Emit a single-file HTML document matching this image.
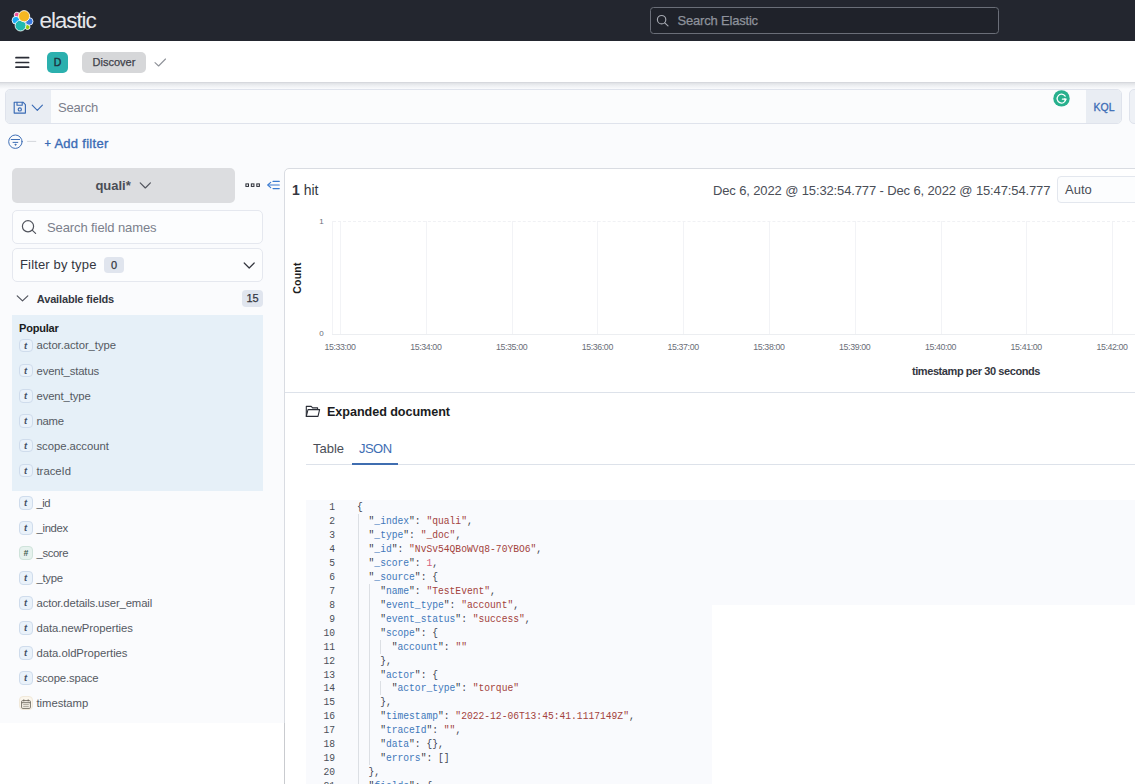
<!DOCTYPE html>
<html>
<head>
<meta charset="utf-8">
<title>Discover - Elastic</title>
<style>
*{box-sizing:border-box;margin:0;padding:0}
html,body{width:1135px;height:784px;overflow:hidden;background:#fff}
body{font-family:"Liberation Sans",sans-serif;color:#343741;position:relative;font-size:13px}
.abs{position:absolute}
#page{position:absolute;left:0;top:0;width:1135px;height:784px;overflow:hidden;background:#fff}
/* top dark header */
#hdr{left:0;top:0;width:1135px;height:41px;background:#23262f}
#hdr .brand{left:39.5px;top:8px;font-size:22.5px;color:#e6e7ea;letter-spacing:-1.1px;line-height:26px}
#gsearch{left:650px;top:6.7px;width:349px;height:27.8px;border:1px solid #6a6e78;border-radius:3.5px;background:#1f222a}
#gsearch span{position:absolute;left:26.6px;top:5.6px;font-size:13px;line-height:15px;color:#8e929c;letter-spacing:-0.2px;-webkit-text-stroke:0.25px #8e929c}
/* second header */
#hdr2{left:0;top:41px;width:1135px;height:42px;background:#fff;border-bottom:1px solid #d6d8dd}
#hdr2shadow{left:0;top:83px;width:1135px;height:6px;background:linear-gradient(#dfe1e5,#eceef1 40%,#fafbfd)}
#avatar{left:47px;top:52px;width:21px;height:21px;border-radius:5px;background:#2bb0ae;color:#1d3340;font-size:10.5px;text-align:center;line-height:21px;-webkit-text-stroke:0.4px #1d3340}
#crumb{left:82px;top:52px;width:64px;height:21px;border-radius:5px;background:#d6d7d9;color:#3f424b;font-size:11px;text-align:center;line-height:21px;-webkit-text-stroke:0.25px #3f424b}
/* body bg */
#bodybg{left:0;top:83px;width:1135px;height:640px;background:#fafbfd}
/* query bar */
#qbar{left:5px;top:89px;width:1117px;height:35px;border:1px solid #dfe3ec;border-radius:5px;background:#fbfcfd;overflow:hidden}
#qbar .pre{left:0;top:0;width:45px;height:33px;background:#e9edf3}
#qbar .ph{left:52px;top:9.5px;font-size:13px;line-height:15px;color:#7b808c;letter-spacing:-0.2px}
#qbar .kql{left:1080px;top:0;width:36px;height:33px;background:#e9edf3;color:#3a6bb5;font-size:10.5px;text-align:center;line-height:34px;-webkit-text-stroke:0.3px #3a6bb5}
#qbar2{left:1129px;top:89px;width:20px;height:35px;border:1px solid #dfe3ec;border-radius:5px;background:#eef1f6}
#gram{left:1053px;top:90px;width:17px;height:17px;border-radius:50%;background:#27b08d}
#addf{left:44.5px;top:135.5px;font-size:13px;line-height:16px;color:#3a6bb5;letter-spacing:0.28px;-webkit-text-stroke:0.35px #3a6bb5}
/* sidebar */
#ipat{left:12px;top:168.2px;width:222.8px;height:34.6px;border-radius:5px;background:#dcdde0}
#ipat span{position:absolute;left:83.4px;top:9.7px;font-size:13px;font-weight:bold;color:#4a4d56;line-height:16px}
.fbox{left:12px;width:251px;height:33px;border:1px solid #e5e8ef;border-radius:5px;background:#fcfdfe}
#sfn{top:210px;height:34.2px}
#sfn span{position:absolute;left:34px;top:9.3px;font-size:13px;line-height:16px;color:#7b808c;letter-spacing:-0.1px}
#fbt{top:248.2px;height:34.2px}
#fbt span.l{position:absolute;left:7px;top:7.5px;font-size:13px;line-height:16px;color:#343741;letter-spacing:0.15px}
#fbt span.b{position:absolute;left:91px;top:7.5px;width:20px;height:16.5px;border-radius:4px;background:#e0e5ee;font-size:11px;line-height:17px;text-align:center;color:#343741;-webkit-text-stroke:0.25px #343741}
#avail{left:36.8px;top:291.5px;font-size:11px;font-weight:bold;line-height:14px;color:#343741;letter-spacing:-0.15px}
#availn{left:242px;top:290px;width:21px;height:17px;border-radius:4px;background:#e0e5ee;font-size:11px;line-height:17px;text-align:center;color:#343741;-webkit-text-stroke:0.25px #343741}
#pop{left:12px;top:314.5px;width:251px;height:176.7px;background:#e6f0f8}
#popt{left:19px;top:321px;font-size:11px;font-weight:bold;line-height:14px;color:#1a1c21;letter-spacing:-0.2px}
.fld{left:19.6px;height:14px;font-size:11.3px;line-height:14px;color:#545962;white-space:nowrap}
.fld i{position:absolute;left:-0.4px;top:0.3px;width:13.3px;height:13.5px;border:1px solid #cfdcec;border-radius:4px;background:#eaf2fa;font-style:italic;font-weight:bold;font-size:9.5px;line-height:12.8px;text-align:center;color:#465066;padding-right:0.6px}
.fld i.num{font-style:italic;background:#e6f2ee;border-color:#cfe3db;color:#3c5a4e;font-size:8.5px;padding-right:0}
.fld i.dt{background:#fbf6ec;border-color:#f1e9da;padding:0}
.fld i.dt svg{position:absolute;left:1.1px;top:1.5px}
.fld b{position:absolute;left:16.9px;top:0;font-weight:normal}
/* main panel */
#main{left:284px;top:168px;width:860px;height:630px;background:#fff;border:1px solid #d9dce2;border-radius:5px}
#sidefill{left:0;top:723px;width:284px;height:70px;background:#fff}
#hits{left:292px;top:182px;font-size:14px;line-height:16px;color:#343741}
#trange{left:713px;top:182.6px;font-size:13px;line-height:16px;color:#4a4e57;white-space:nowrap;letter-spacing:-0.13px}
#auto{left:1057px;top:175.6px;width:100px;height:27.8px;border:1px solid #e3e7ee;border-radius:4px;background:#fcfdfe}
#auto span{position:absolute;left:7px;top:5.6px;font-size:13px;line-height:16px;color:#4a4e57}
.yl{font-size:8px;line-height:10px;color:#6a6e78}
.xl{font-size:8.8px;line-height:10px;color:#6a6e78;width:50px;text-align:center;top:342.2px;letter-spacing:-0.38px}
.vg{top:221px;width:1px;height:113px;background:#f2f3f6}
#count{left:277px;top:272.4px;width:40px;height:12px;font-size:10.5px;font-weight:bold;line-height:12px;text-align:center;transform:rotate(-90deg);color:#1a1c21;letter-spacing:0.25px}
#tps{left:896px;top:365px;width:160px;text-align:center;font-size:11px;font-weight:bold;line-height:13px;color:#343741;letter-spacing:-0.42px}
#sep{left:285px;top:392px;width:850px;height:1px;background:#dde2ea}
#exdoc{left:327px;top:403.5px;font-size:12.6px;font-weight:bold;line-height:16px;color:#1a1c21;letter-spacing:-0.05px}
#tabline{left:306px;top:464px;width:829px;height:1px;background:#dde2ea}
#tabT{left:313px;top:441px;font-size:13px;line-height:16px;color:#4a4e57}
#tabJ{left:359px;top:441px;font-size:13px;line-height:16px;color:#3d6db3;letter-spacing:-0.55px}
#tabU{left:352px;top:463px;width:46px;height:2px;background:#3f6db0}
/* code */
#code{left:306px;top:499.5px;width:829px;height:285px;background:#f9fafd}
#codew{left:712px;top:605px;width:423px;height:179px;background:#fff}
#ln{left:304.9px;top:501.1px;width:30px;text-align:right;font-family:"Liberation Mono",monospace;font-size:10.6px;line-height:13.95px;color:#4a4e57;white-space:pre;transform:scaleX(0.910);transform-origin:right top}
#src{left:357.4px;top:501.1px;font-family:"Liberation Mono",monospace;font-size:10.6px;line-height:13.95px;color:#3f4451;white-space:pre;transform:scaleX(0.910);transform-origin:left top}
#src .k{color:#3f78ba}
#src .q{color:#3a3f4a}
#src .s{color:#a3423c}
#src .n{color:#d5607a}
.ig{width:1px;background:#dcdfe4}
#xaxis{left:332px;top:333.5px;width:803px;height:1px;background:#eceef1}
#yaxis{left:332px;top:221px;width:1px;height:113px;background:#f2f3f6}
#topdash{left:333px;top:221px;width:802px;height:0;border-top:1px dashed #f0f1f4}
</style>
</head>
<body>
<div id="page">
<!-- HEADER -->
<div class="abs" id="hdr">
  <div class="abs brand">elastic</div>
</div>
<div class="abs" id="gsearch"><span>Search Elastic</span></div>
<div class="abs" id="hdr2"></div>
<div class="abs" id="bodybg"></div>
<div class="abs" id="hdr2shadow"></div>
<div class="abs" id="avatar">D</div>
<div class="abs" id="crumb">Discover</div>
<!-- QUERY BAR -->
<div class="abs" id="qbar">
  <div class="abs pre"></div>
  <div class="abs ph">Search</div>
  <div class="abs kql">KQL</div>
</div>
<div class="abs" id="qbar2"></div>
<div class="abs" id="addf"><span style="font-size:11px;position:relative;top:-0.3px">+</span> Add filter</div>
<!-- SIDEBAR -->
<div class="abs" id="ipat"><span>quali*</span></div>
<div class="abs fbox" id="sfn"><span>Search field names</span></div>
<div class="abs fbox" id="fbt"><span class="l">Filter by type</span><span class="b">0</span></div>
<div class="abs" id="avail">Available fields</div>
<div class="abs" id="availn">15</div>
<div class="abs" id="pop"></div>
<div class="abs" id="popt">Popular</div>
<!--FIELDS-->
<div class="abs fld" style="top:338.4px"><i>t</i><b style="letter-spacing:-0.056px">actor.actor_type</b></div>
<div class="abs fld" style="top:363.7px"><i>t</i><b style="letter-spacing:-0.122px">event_status</b></div>
<div class="abs fld" style="top:389.2px"><i>t</i><b style="letter-spacing:-0.118px">event_type</b></div>
<div class="abs fld" style="top:414.2px"><i>t</i><b style="letter-spacing:-0.266px">name</b></div>
<div class="abs fld" style="top:438.7px"><i>t</i><b style="letter-spacing:-0.043px">scope.account</b></div>
<div class="abs fld" style="top:463.7px"><i>t</i><b style="letter-spacing:0px">traceId</b></div>
<div class="abs fld" style="top:496.0px"><i>t</i><b style="letter-spacing:-0.49px">_id</b></div>
<div class="abs fld" style="top:521.0px"><i>t</i><b style="letter-spacing:-0.316px">_index</b></div>
<div class="abs fld" style="top:546.0px"><i class="num">#</i><b style="letter-spacing:-0.37px">_score</b></div>
<div class="abs fld" style="top:571.0px"><i>t</i><b style="letter-spacing:-0.268px">_type</b></div>
<div class="abs fld" style="top:596.0px"><i>t</i><b style="letter-spacing:-0.129px">actor.details.user_email</b></div>
<div class="abs fld" style="top:621.0px"><i>t</i><b style="letter-spacing:-0.058px">data.newProperties</b></div>
<div class="abs fld" style="top:646.0px"><i>t</i><b style="letter-spacing:-0.039px">data.oldProperties</b></div>
<div class="abs fld" style="top:671.0px"><i>t</i><b style="letter-spacing:-0.131px">scope.space</b></div>
<div class="abs fld" style="top:696.0px"><i class="dt"><svg width="10" height="10" viewBox="0 0 10 10"><rect x="0.6" y="1.6" width="8.8" height="7.8" rx="1" fill="none" stroke="#6b665c" stroke-width="0.9"/><path d="M0.6 3.7h8.8M2.8 0.4v2M7.2 0.4v2" stroke="#6b665c" stroke-width="0.9" fill="none"/><path d="M2.2 5.6h5.6M2.2 7.4h5.6" stroke="#8a857b" stroke-width="0.7" fill="none"/></svg></i><b style="letter-spacing:-0.045px">timestamp</b></div>
<!--/FIELDS-->
<!-- MAIN -->
<div class="abs" id="sidefill"></div>
<div class="abs" id="main"></div>
<div class="abs" style="left:284px;top:723px;width:1px;height:61px;background:#c9cbcf"></div>
<div class="abs" id="hits"><b>1</b> hit</div>
<div class="abs" id="trange">Dec 6, 2022 @ 15:32:54.777 - Dec 6, 2022 @ 15:47:54.777</div>
<div class="abs" id="auto"><span>Auto</span></div>
<!--CHART-->
<div class="abs vg" style="left:340.0px"></div>
<div class="abs xl" style="left:315.0px">15:33:00</div>
<div class="abs vg" style="left:425.8px"></div>
<div class="abs xl" style="left:400.8px">15:34:00</div>
<div class="abs vg" style="left:511.6px"></div>
<div class="abs xl" style="left:486.6px">15:35:00</div>
<div class="abs vg" style="left:597.3px"></div>
<div class="abs xl" style="left:572.3px">15:36:00</div>
<div class="abs vg" style="left:683.1px"></div>
<div class="abs xl" style="left:658.1px">15:37:00</div>
<div class="abs vg" style="left:768.9px"></div>
<div class="abs xl" style="left:743.9px">15:38:00</div>
<div class="abs vg" style="left:854.7px"></div>
<div class="abs xl" style="left:829.7px">15:39:00</div>
<div class="abs vg" style="left:940.5px"></div>
<div class="abs xl" style="left:915.5px">15:40:00</div>
<div class="abs vg" style="left:1026.2px"></div>
<div class="abs xl" style="left:1001.2px">15:41:00</div>
<div class="abs vg" style="left:1112.0px"></div>
<div class="abs xl" style="left:1087.0px">15:42:00</div>
<!--/CHART-->
<div class="abs yl" style="left:319.3px;top:216.8px">1</div>
<div class="abs yl" style="left:319.3px;top:329px">0</div>
<div class="abs" id="yaxis"></div>
<div class="abs" id="topdash"></div>
<div class="abs" id="xaxis"></div>
<div class="abs" id="count">Count</div>
<div class="abs" id="tps">timestamp per 30 seconds</div>
<div class="abs" id="sep"></div>
<div class="abs" id="exdoc">Expanded document</div>
<div class="abs" id="tabline"></div>
<div class="abs" id="tabT">Table</div>
<div class="abs" id="tabJ">JSON</div>
<div class="abs" id="tabU"></div>
<div class="abs" id="code"></div>
<div class="abs" id="codew"></div>
<div class="abs ig" style="left:357.5px;top:514px;height:270px"></div>
<div class="abs ig" style="left:368.9px;top:583.7px;height:181.5px"></div>
<div class="abs ig" style="left:380.3px;top:639.5px;height:14px"></div>
<div class="abs ig" style="left:380.3px;top:681.4px;height:14px"></div>
<!--CODE-->
<div class="abs" id="ln">1
2
3
4
5
6
7
8
9
10
11
12
13
14
15
16
17
18
19
20
21</div>
<div class="abs" id="src">{
  <span class="q">"</span><span class="k">_index</span><span class="q">"</span>: <span class="s">"quali"</span>,
  <span class="q">"</span><span class="k">_type</span><span class="q">"</span>: <span class="s">"_doc"</span>,
  <span class="q">"</span><span class="k">_id</span><span class="q">"</span>: <span class="s">"NvSv54QBoWVq8-70YBO6"</span>,
  <span class="q">"</span><span class="k">_score</span><span class="q">"</span>: <span class="n">1</span>,
  <span class="q">"</span><span class="k">_source</span><span class="q">"</span>: {
    <span class="q">"</span><span class="k">name</span><span class="q">"</span>: <span class="s">"TestEvent"</span>,
    <span class="q">"</span><span class="k">event_type</span><span class="q">"</span>: <span class="s">"account"</span>,
    <span class="q">"</span><span class="k">event_status</span><span class="q">"</span>: <span class="s">"success"</span>,
    <span class="q">"</span><span class="k">scope</span><span class="q">"</span>: {
      <span class="q">"</span><span class="k">account</span><span class="q">"</span>: <span class="s">""</span>
    },
    <span class="q">"</span><span class="k">actor</span><span class="q">"</span>: {
      <span class="q">"</span><span class="k">actor_type</span><span class="q">"</span>: <span class="s">"torque"</span>
    },
    <span class="q">"</span><span class="k">timestamp</span><span class="q">"</span>: <span class="s">"2022-12-06T13:45:41.1117149Z"</span>,
    <span class="q">"</span><span class="k">traceId</span><span class="q">"</span>: <span class="s">""</span>,
    <span class="q">"</span><span class="k">data</span><span class="q">"</span>: {},
    <span class="q">"</span><span class="k">errors</span><span class="q">"</span>: []
  },
  <span class="q">"</span><span class="k">fields</span><span class="q">"</span>: {</div>
<!--/CODE-->

<!-- ICONS -->
<svg class="abs" style="left:10px;top:8px" width="26" height="26" viewBox="10 8 26 26">
  <g stroke="#fff" stroke-width="0.85">
  <circle cx="16.9" cy="14.9" r="2.7" fill="#ee5097"/>
  <circle cx="27.5" cy="27" r="2.5" fill="#93c90e"/>
  <circle cx="16" cy="20.3" r="3.9" fill="#1ba9f5"/>
  <circle cx="29.2" cy="21.4" r="3.8" fill="#3a7be0"/>
  <circle cx="20.5" cy="25.6" r="5.4" fill="#20b9b0"/>
  <circle cx="24.1" cy="16.2" r="5.6" fill="#f5b722"/>
  </g>
</svg>
<svg class="abs" style="left:655px;top:13px" width="16" height="16" viewBox="655 13 16 16" fill="none" stroke="#a6a9b1" stroke-width="1.15" stroke-linecap="round">
  <circle cx="661.6" cy="19.7" r="4.2"/><path d="M664.7 22.8L668 25.9"/>
</svg>
<svg class="abs" style="left:14px;top:55px" width="17" height="15" viewBox="14 55 17 15" stroke="#2a2d36" stroke-width="1.7" stroke-linecap="round">
  <path d="M16 57.7H28.6M16 62.5H28.6M16 67.2H28.6"/>
</svg>
<svg class="abs" style="left:152px;top:56px" width="16" height="13" viewBox="152 56 16 13" fill="none" stroke="#8f9299" stroke-width="1.1" stroke-linecap="round" stroke-linejoin="round">
  <path d="M155 62.6L158.6 66L165.5 59"/>
</svg>
<svg class="abs" style="left:12px;top:100px" width="33" height="16" viewBox="12 100 33 16" fill="none" stroke="#3a6bb5" stroke-width="1.15" stroke-linejoin="round" stroke-linecap="round">
  <path d="M14.2 102.2H23L25.4 104.6V113.1H14.2Z"/>
  <path d="M17 102.2V105.2H22.2V102.2"/>
  <circle cx="19.8" cy="109.4" r="1.6"/>
  <path d="M32.2 105.2L37.3 110.3L42.4 105.2"/>
</svg>
<svg class="abs" style="left:6px;top:132px" width="34" height="19" viewBox="6 132 34 19" fill="none" stroke="#3f6fb6" stroke-width="1" stroke-linecap="round">
  <circle cx="15.4" cy="141.7" r="6.7"/>
  <path d="M11.2 139.5H19.6M13 142.4H17.8"/>
  <circle cx="15.4" cy="144.7" r="0.5" fill="#3a6bb5"/>
  <path d="M27.5 141.4H35.8" stroke="#d3d6dc" stroke-width="1"/>
</svg>
<svg class="abs" style="left:1053px;top:90px" width="17" height="17" viewBox="0 0 17 17">
  <circle cx="8.5" cy="8.4" r="8.2" fill="#27b08d"/>
  <path d="M12.2 6.2A4.4 4.4 0 1 0 12.9 9.2H9.4" fill="none" stroke="#fff" stroke-width="1.25" stroke-linecap="round"/>
  <path d="M11.2 8L13.6 9.3L11.4 10.9Z" fill="#fff"/>
</svg>
<svg class="abs" style="left:138px;top:180px" width="15" height="11" viewBox="138 180 15 11" fill="none" stroke="#50535c" stroke-width="1.15" stroke-linecap="round" stroke-linejoin="round">
  <path d="M140.2 182.8L145.3 188L150.4 182.8"/>
</svg>
<svg class="abs" style="left:244px;top:180px" width="38" height="11" viewBox="244 180 38 11" fill="none">
  <g stroke="#2a2d36" stroke-width="1"><rect x="245.9" y="183.9" width="2.6" height="2.5"/><rect x="251.35" y="183.9" width="2.6" height="2.5"/><rect x="256.8" y="183.9" width="2.6" height="2.5"/></g>
  <g stroke="#3a7bd0" stroke-width="1.1" stroke-linecap="round" stroke-linejoin="round"><path d="M273 181.4H279.3M268.4 185H279.3M273 188.6H279.3"/><path d="M270.7 182.3L267.7 185L270.7 187.7"/></g>
</svg>
<svg class="abs" style="left:20px;top:219px" width="18" height="17" viewBox="20 219 18 17" fill="none" stroke="#50535c" stroke-width="1.2" stroke-linecap="round">
  <circle cx="28" cy="226.3" r="5.6"/><path d="M32.4 230.4L35.6 233.4"/>
</svg>
<svg class="abs" style="left:242px;top:260px" width="15" height="11" viewBox="242 260 15 11" fill="none" stroke="#34373f" stroke-width="1.2" stroke-linecap="round" stroke-linejoin="round">
  <path d="M244.2 263L249.2 268L254.2 263"/>
</svg>
<svg class="abs" style="left:15px;top:293px" width="15" height="11" viewBox="15 293 15 11" fill="none" stroke="#50535c" stroke-width="1.2" stroke-linecap="round" stroke-linejoin="round">
  <path d="M17.2 295.9L22.5 300.9L27.8 295.9"/>
</svg>
<svg class="abs" style="left:304px;top:404px" width="18" height="15" viewBox="304 404 18 15" fill="none" stroke="#2a2d36" stroke-width="1.1" stroke-linejoin="round">
  <path d="M306.3 416.4V406.4H311.2L312.6 407.9H317.6V409.6"/>
  <path d="M306.3 416.4L308 409.6H319.6L318 416.4Z"/>
</svg>
<!-- /ICONS -->
</div>
</body>
</html>
